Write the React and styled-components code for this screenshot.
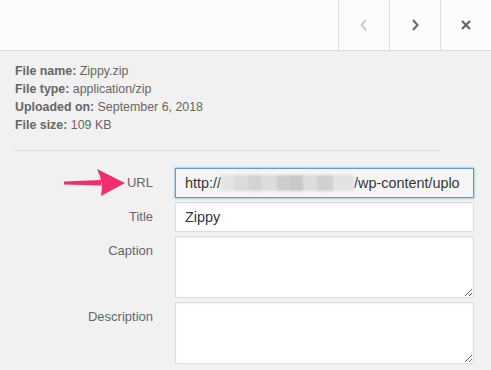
import React from "react";
import styled, { createGlobalStyle } from "styled-components";

const Global = createGlobalStyle`
  html, body {
    margin: 0;
    padding: 0;
    background: #f1f1f1;
    font-family: "Liberation Sans", Arial, sans-serif;
  }
`;

const Frame = styled.div`
  position: relative;
  width: 491px;
  height: 370px;
  overflow: hidden;
  background: #f1f1f1;
`;

const Header = styled.div`
  display: flex;
  justify-content: flex-end;
  height: 50px;
  background: #fcfcfc;
  border-bottom: 1px solid #ddd;
`;

const NavButton = styled.button`
  display: flex;
  align-items: center;
  justify-content: center;
  width: 51px;
  height: 50px;
  padding: 0;
  background: transparent;
  border: none;
  border-left: 1px solid #ddd;
  color: ${(p) => (p.$disabled ? "#ccc" : "#666")};
  cursor: pointer;
`;

const Details = styled.div`
  margin: 11px 0 0 15px;
  width: 425px;
  padding-bottom: 16px;
  border-bottom: 1px solid #ddd;
  font-size: 12.4px;
  line-height: 18px;
  color: #666;
`;

const Line = styled.div`
  strong {
    font-weight: 700;
  }
`;

const Form = styled.div`
  display: grid;
  grid-template-columns: 138px 299px;
  column-gap: 22px;
  row-gap: 4px;
  margin: 17px 0 0 15px;
`;

const Label = styled.label`
  font-size: 13px;
  line-height: 30px;
  color: #666;
  text-align: right;
`;

const Field = styled.div`
  box-sizing: border-box;
  height: 30px;
  padding: 0 4px 0 9px;
  border: 1px solid ${(p) => (p.$focus ? "#5b9dd9" : "#ddd")};
  background: ${(p) => (p.$focus ? "#f5f5f5" : "#fff")};
  box-shadow: ${(p) =>
    p.$focus
      ? "0 0 2px rgba(30, 140, 190, 0.8)"
      : "inset 0 1px 2px rgba(0, 0, 0, 0.07)"};
  font-size: 14.4px;
  line-height: 28px;
  color: #32373c;
  white-space: nowrap;
  overflow: hidden;
`;

const Blur = styled.span`
  display: inline-block;
  vertical-align: middle;
  width: 133px;
  height: 16px;
  margin-top: -3px;
  background: linear-gradient(
    90deg,
    #e4e4e4 0 10%,
    #dbdbdb 10% 20%,
    #d2d2d2 20% 30%,
    #dcdcdc 30% 42%,
    #cdcdcd 42% 52%,
    #c8c8c8 52% 62%,
    #dddddd 62% 72%,
    #d0d0d0 72% 84%,
    #e3e3e3 84% 100%
  );
  filter: blur(1px);
`;

const TextArea = styled.textarea`
  box-sizing: border-box;
  display: block;
  width: 299px;
  height: 62px;
  margin: 0;
  padding: 6px 9px;
  border: 1px solid #ddd;
  background: #fff;
  box-shadow: inset 0 1px 2px rgba(0, 0, 0, 0.07);
  font-family: inherit;
  font-size: 14px;
  color: #32373c;
  resize: vertical;
  outline: none;
`;

const Arrow = styled.svg`
  position: absolute;
  left: 60px;
  top: 166px;
`;

const Chevron = ({ dir }) => (
  <svg width="12" height="14" viewBox="0 0 12 14">
    <path
      d={dir === "left" ? "M8 2 L3.5 7 L8 12" : "M4 2 L8.5 7 L4 12"}
      fill="none"
      stroke="currentColor"
      strokeWidth="2"
    />
  </svg>
);

const Close = () => (
  <svg width="12" height="12" viewBox="0 0 12 12">
    <path
      d="M2 2 L10 10 M10 2 L2 10"
      stroke="currentColor"
      strokeWidth="2.2"
    />
  </svg>
);

export default function App() {
  return (
    <Frame>
      <Global />
      <Header>
        <NavButton $disabled>
          <Chevron dir="left" />
        </NavButton>
        <NavButton>
          <Chevron dir="right" />
        </NavButton>
        <NavButton>
          <Close />
        </NavButton>
      </Header>

      <Details>
        <Line>
          <strong>File name:</strong> Zippy.zip
        </Line>
        <Line>
          <strong>File type:</strong> application/zip
        </Line>
        <Line>
          <strong>Uploaded on:</strong> September 6, 2018
        </Line>
        <Line>
          <strong>File size:</strong> 109 KB
        </Line>
      </Details>

      <Form>
        <Label>URL</Label>
        <Field $focus>
          http://<Blur />/wp-content/uplo
        </Field>
        <Label>Title</Label>
        <Field>Zippy</Field>
        <Label>Caption</Label>
        <TextArea />
        <Label>Description</Label>
        <TextArea />
      </Form>

      <Arrow width="70" height="34" viewBox="0 0 70 34">
        <path d="M4 15.5 L41 14 L41 19.5 L4 18.5 Z" fill="#ef2f6c" />
        <path d="M37 3 L65 17 L41 30 Q44 17 37 3 Z" fill="#ef2f6c" />
      </Arrow>
    </Frame>
  );
}
